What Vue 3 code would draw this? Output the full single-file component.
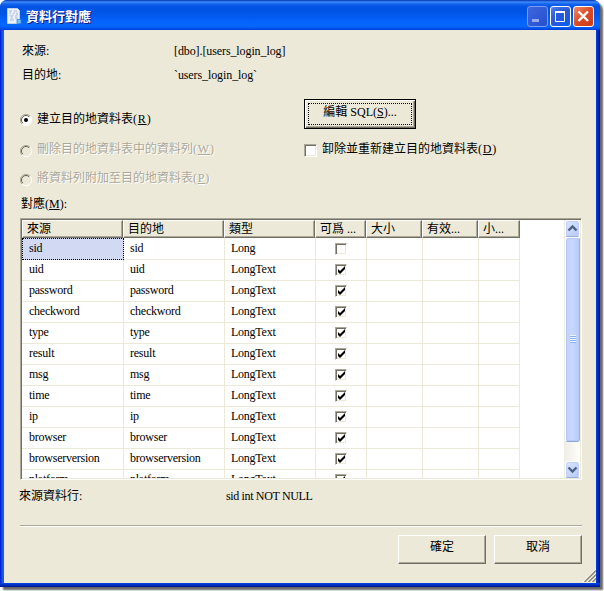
<script setup>
const columns = ['來源', '目的地', '類型', '可爲 ...', '大小', '有效...', '小...']
const names = ['sid', 'uid', 'password', 'checkword', 'type', 'result', 'msg', 'time', 'ip', 'browser', 'browserversion', 'platform']
const rows = names.map((name, i) => ({ name, type: i ? 'LongText' : 'Long', nullable: i > 0 }))
const choices = [
  { text: '建立目的地資料表', key: 'R', on: true },
  { text: '刪除目的地資料表中的資料列', key: 'W', off: true },
  { text: '將資料列附加至目的地資料表', key: 'P', off: true },
]
</script>

<template>
  <div class="screen">
    <div class="window">
      <header class="titlebar">
        <svg class="app-icon" width="16" height="16" viewBox="0 0 16 16">
          <path d="M.5.5h10l2 2v13H.5z" fill="#eef2fb" stroke="#c3d0ec" />
          <path d="M2 3h3M7 3h3M3 5h1M6 5h2M9 6h2M3 8h3M8 8h2M4 10h2M8 10h3M3 12h4" stroke="#a9b9dc" />
          <path d="M3 3v5M6 5v3M10 4v4M4 10v3" stroke="#c3cfe9" />
          <rect x="10" y="11.5" width="4" height="4" fill="#6fc3f5" stroke="#2a82df" stroke-width=".7" />
        </svg>
        <h1>資料行對應</h1>
        <div class="captions">
          <button class="cap dim"><svg width="21" height="21"><path d="M5 13h7v3H5z" fill="#98a9ee" /></svg></button>
          <button class="cap"><svg width="21" height="21"><path d="M5.5 6.5h9v9h-9z" fill="none" stroke="#fff" /><path d="M5 5h10v2H5z" fill="#fff" /></svg></button>
          <button class="cap close"><svg width="21" height="21"><path d="M5.5 5.5l9.5 9.5m0-9.5l-9.5 9.5" stroke="#fff" stroke-width="2.4" /></svg></button>
        </div>
      </header>
      <main class="client">
        <div class="info"><span>來源:</span><span class="lat">[dbo].[users_login_log]</span></div>
        <div class="info"><span>目的地:</span><span class="lat">`users_login_log`</span></div>

        <section class="options">
          <div class="choices">
            <label v-for="c in choices" :key="c.key" class="choice" :class="{ off: c.off }">
              <svg class="radio" width="12" height="12" viewBox="0 0 12 12">
                <circle cx="6" cy="6" r="5" :fill="c.off ? '#ece9d8' : '#fff'" />
                <path d="M10 2A5.5 5.5 0 0 1 2 10" fill="none" stroke="#fff" />
                <path d="M2 10A5.5 5.5 0 0 1 10 2" fill="none" stroke="#aca899" />
                <path d="M2.8 9.2A4.5 4.5 0 0 1 9.2 2.8" fill="none" stroke="#605e50" />
                <circle v-if="c.on" cx="6" cy="6" r="2" fill="#000" />
              </svg>
              <span>{{ c.text }}<span class="key">(<u>{{ c.key }}</u>)</span></span>
            </label>
          </div>
          <div class="side">
            <button class="push sql"><span>編輯 SQL(<u>S</u>)...</span></button>
            <label class="drop"><i class="box"></i><span>卸除並重新建立目的地資料表<span class="key">(<u>D</u>)</span></span></label>
          </div>
        </section>

        <div class="map-label">對應(<u>M</u>):</div>

        <div class="list">
          <div class="grid">
            <div class="row head"><span v-for="c in columns" :key="c">{{ c }}</span></div>
            <div v-for="(r, i) in rows" :key="r.name" class="row" :class="{ first: i === 0 }">
              <span>{{ r.name }}</span>
              <span>{{ r.name }}</span>
              <span>{{ r.type }}</span>
              <span class="mid">
                <i class="box small"><svg v-if="r.nullable" width="9" height="9"><path d="M1 3v3l2 2 5-5V0L3 5z" fill="#000" /></svg></i>
              </span>
              <span></span><span></span><span></span>
            </div>
          </div>
          <div class="scroll">
            <div class="arrow"><svg width="13" height="13"><path d="M2.5 8.5l4-4 4 4" fill="none" stroke="#4d6185" stroke-width="2.4" /></svg></div>
            <div class="thumb"><i></i><i></i><i></i><i></i></div>
            <div class="arrow down"><svg width="13" height="13"><path d="M2.5 4.5l4 4 4-4" fill="none" stroke="#4d6185" stroke-width="2.4" /></svg></div>
          </div>
        </div>

        <div class="detail"><span>來源資料行:</span><span class="sql-type">sid int NOT NULL</span></div>
        <hr />
        <footer class="actions">
          <button class="push">確定</button>
          <button class="push">取消</button>
        </footer>
        <svg class="grip" width="14" height="14">
          <path d="M1 14L14 1M5 14l9-9M9 14l5-5" stroke="#fff" stroke-width="1" />
          <path d="M2.5 14L14 2.5M6.5 14L14 6.5M10.5 14l3.5-3.5" stroke="#8f8b7b" stroke-width="1.6" />
        </svg>
      </main>
    </div>
  </div>
</template>

<style>
html, body { margin: 0; background: #fff; overflow: hidden; }
</style>

<style scoped>
* { box-sizing: border-box; }
.screen {
  width: 604px; height: 591px; overflow: hidden; position: relative;
  font: 12px/16px "Liberation Serif", "Noto Sans CJK TC", serif; color: #000;
}
.window {
  width: 600px; height: 587px; display: flex; flex-direction: column;
  border-radius: 7px 7px 0 0; overflow: visible;
  background: linear-gradient(90deg, #0019cf, #0831d9 1px, #166aee 3px, #0855dd 4px, #0855dd 50%, #0046e8 596px, #0030d0 597px, #00138c 600px);
  box-shadow: 3px 3px 2px rgba(0, 0, 0, .6);
}
.titlebar {
  height: 30px; flex: none; display: flex; align-items: center; padding: 3px 6px 0 7px;
  border-radius: 7px 7px 0 0;
  background: linear-gradient(#0831b0 0, #3c8cfb 2px, #1564ee 4px, #0054e3 7px, #0055e5 13px, #0562fb 21px, #0568ff 26px, #0358ee 28px, #003dd7 30px);
}
.app-icon { margin-top: -2px; }
h1 { margin: 0 auto 0 3px; font-size: 13px; line-height: 18px; font-weight: 700; color: #fff; text-shadow: 1px 1px #0a1883; }
.captions { display: flex; gap: 2px; }
.cap {
  width: 21px; height: 21px; padding: 0; border: 1px solid #fff; border-radius: 3px; display: grid; place-items: center;
  background: radial-gradient(circle at 80% 90%, #0c5cf0, #2b59d8 60%, #5583ef);
}
.cap svg { display: block; flex: none; margin: -1px; }
.dim { border-color: #7d9df2; background: linear-gradient(135deg, #3f66dc, #2450cf); }
.close { background: linear-gradient(135deg, #ef8b6c, #dc4a25 50%, #c93c13); }
.client { width: 592px; height: 553px; margin-left: 4px; padding: 13px 14px 0 16px; background: #ece9d8; position: relative; }
.window::after { content: ""; height: 4px; background: linear-gradient(#0046e8, #0030c0 50%, #00138c); }
.info { display: flex; height: 24px; padding-left: 2px; }
.info span:first-child { width: 152px; }
.lat { letter-spacing: -.1px; }
.sql-type { letter-spacing: -.35px; }
.key { letter-spacing: .8px; }
.options { display: flex; height: 105px; padding-top: 8px; }
.choices { width: 284px; padding-top: 12px; }
.choice { display: flex; height: 29.5px; gap: 5px; white-space: nowrap; }
.radio { margin-top: 3px; flex: none; }
.choice.off .radio { margin-top: 4px; }
.off { color: #aca899; text-shadow: 1px 1px #fff; }
.push {
  width: 88px; height: 29px; padding: 0 0 5px; font: inherit; color: #000; background: #ece9d8; border-radius: 0;
  border: 1px solid; border-color: #fff #716f64 #716f64 #fff; box-shadow: inset -1px -1px #aca899;
}
.sql { width: 112px; height: 30px; padding: 2px; border: 1px solid #000; box-shadow: inset 1px 1px #fff, inset -1px -1px #716f64, inset -2px -2px #aca899; }
.sql span { display: block; width: 104px; height: 22px; margin: 1px; line-height: 17px; border: 1px dotted #000; }
.drop { display: flex; align-items: flex-start; gap: 5px; margin-top: 12px; white-space: nowrap; }
.box {
  flex: none; width: 13px; height: 13px; margin-top: 3px; background: #fff;
  border: 1px solid; border-color: #aca899 #fff #fff #aca899; box-shadow: inset 1px 1px #716f64, inset -1px -1px #ece9d8;
}
.map-label { height: 22px; padding-left: 1px; line-height: 16px; }
.list {
  width: 562px; height: 262px; display: flex; justify-content: space-between; background: #fff; padding: 1px;
  border: 1px solid; border-color: #aca899 #fff #fff #aca899; box-shadow: inset 1px 1px #716f64, inset -1px -1px #ece9d8;
}
.grid { width: 498px; height: 258px; overflow: hidden; }
.row { display: grid; grid-template-columns: 102px 101px 91px 51px 56px 56px 41px; height: 21px; }
.row > span { border-right: 1px solid #ece9d8; border-bottom: 1px solid #ece9d8; padding: 1px 0 0 6px; line-height: 16px; letter-spacing: -.24px; white-space: nowrap; }
.row > span:first-child { padding-left: 7px; }
.first { height: 22px; }
.first > span { padding-top: 2px; }
.first > span:first-child { background: #d1daf2; border: 1px dotted #000; padding: 1px 0 0 6px; }
.row.head { height: 18px; grid-template-columns: 101px 101px 91px 51px 56px 56px 42px; }
.row.head > span {
  height: 18px; padding: 0 0 0 4px; line-height: 16px; letter-spacing: 0; background: #ece9d8; overflow: hidden;
  border: 1px solid; border-color: #fff #716f64 #716f64 #fff; box-shadow: inset -1px -1px #aca899;
}
.row > .mid { padding: 4px 0 0 19px; }
.first > .mid { padding-top: 5px; }
.small { display: block; width: 12px; height: 12px; margin: 0; padding: 1px; }
.small svg { display: block; }
.scroll { width: 16px; height: 258px; display: flex; flex-direction: column; background: linear-gradient(90deg, #eeede5, #fefefb); }
.arrow { width: 15px; height: 17px; margin-left: 1px; display: grid; place-items: center; border: 1px solid #fff; border-bottom-color: #97afdc; border-radius: 3px; background: linear-gradient(135deg, #dce6ff, #b4c9f8); box-shadow: inset 0 0 0 1px #c0d0f5; }
.thumb {
  width: 15px; height: 205px; margin-left: 1px; display: flex; flex-direction: column; align-items: center; justify-content: center; gap: 1px;
  border: 1px solid #fff; border-right-color: #a0b5dc; border-bottom-color: #8da7d2; border-radius: 3px; background: linear-gradient(90deg, #c0d1fa, #cad8ff 45%, #b8cbf6); box-shadow: inset 0 0 0 1px #b6c9f3;
}
.thumb i { width: 6px; height: 1px; background: #8cb0f8; box-shadow: 0 -1px #eef4ff; }
.down { margin-top: auto; }
.detail { display: flex; height: 44px; padding-top: 8px; margin-left: -1px; }
.detail span:first-child { width: 207px; }
hr { width: 562px; height: 2px; margin: 1px 0 0; border: 0; border-top: 1px solid #aca899; background: #fff; }
.actions { display: flex; justify-content: flex-end; gap: 8px; width: 562px; margin-top: 8px; }
.grip { position: absolute; right: 0; bottom: 1px; }
</style>
